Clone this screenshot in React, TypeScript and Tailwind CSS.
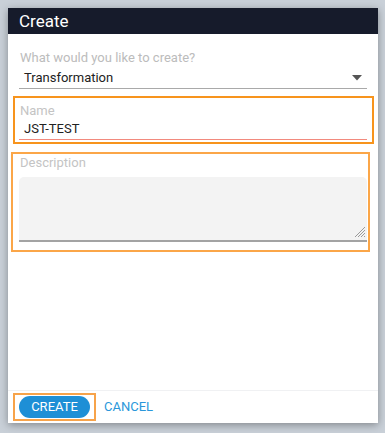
import React from 'react';

const font = { fontFamily: 'Roboto, "Liberation Sans", sans-serif' };

const ResizeGrip: React.FC = () => (
  <svg width="12" height="12" viewBox="0 0 12 12" className="absolute right-[1px] bottom-[2px]">
    <g stroke="#9a9a9a" strokeWidth="1">
      <line x1="11" y1="1" x2="1" y2="11" />
      <line x1="11" y1="4" x2="4" y2="11" />
      <line x1="11" y1="7" x2="7" y2="11" />
      <line x1="11" y1="10" x2="10" y2="11" />
    </g>
  </svg>
);

export default function App() {
  return (
    <div className="w-[385px] h-[433px] bg-[#c9d0d8] pt-[8px] pl-[8px] overflow-hidden" style={font}>
      <div className="w-[370px] h-[415px] bg-white flex flex-col shadow-[0_2px_8px_rgba(0,0,0,0.35)]">
        <div className="h-[26px] bg-[#161b2b] px-[11px] flex items-center text-white text-[17px] leading-none">
          Create
        </div>

        <div className="flex-1 flex flex-col">
          {/* type select */}
          <div className="mx-[11px] mt-[16px]">
            <div className="text-[13px] leading-[16px] text-[#bcbcbc] pl-[1px]">What would you like to create?</div>
            <div className="h-[22px] mt-[1px] flex items-center justify-between border-b border-[#a9a9a9] pl-[5px] pr-[5px]">
              <span className="text-[13px] text-[#222]">Transformation</span>
              <svg width="10" height="6" viewBox="0 0 10 6">
                <path d="M0 0 L10 0 L5 5.5 Z" fill="#555" />
              </svg>
            </div>
          </div>

          {/* name */}
          <div className="ml-[5px] mr-[4px] mt-[7px] h-[48px] border-2 border-[#f7941d] pl-[4px] pr-[5px] pt-[5px]">
            <div className="text-[13px] leading-[16px] text-[#c4c4c4] pl-[1px]">Name</div>
            <div className="h-[21px] flex items-center border-b border-[#f28a7e] pl-[5px]">
              <span className="text-[13px] text-[#222]">JST-TEST</span>
            </div>
          </div>

          {/* description */}
          <div className="ml-[3px] mr-[8px] mt-[8px] h-[100px] border-2 border-[#fba648] pl-[6px] pr-[1px] pt-[1px]">
            <div className="text-[13px] leading-[16px] text-[#c4c4c4] pl-[1px]">Description</div>
            <div className="relative mt-[6px] h-[65px] bg-[#f3f3f3] rounded-t-[5px] border-b-2 border-[#a3a3a3]">
              <ResizeGrip />
            </div>
          </div>
        </div>

        <div className="h-[33px] border-t border-[#f0f1f3] flex items-center pl-[5px] gap-[8px]">
          <div className="border-2 border-[#f7a34a] px-[4px] py-[1px]">
            <div className="h-[22px] w-[71px] rounded-full bg-[#1e8fd6] flex items-center justify-center text-white text-[13px]">
              CREATE
            </div>
          </div>
          <div className="text-[13px] text-[#2a97da]">CANCEL</div>
        </div>
      </div>
    </div>
  );
}
